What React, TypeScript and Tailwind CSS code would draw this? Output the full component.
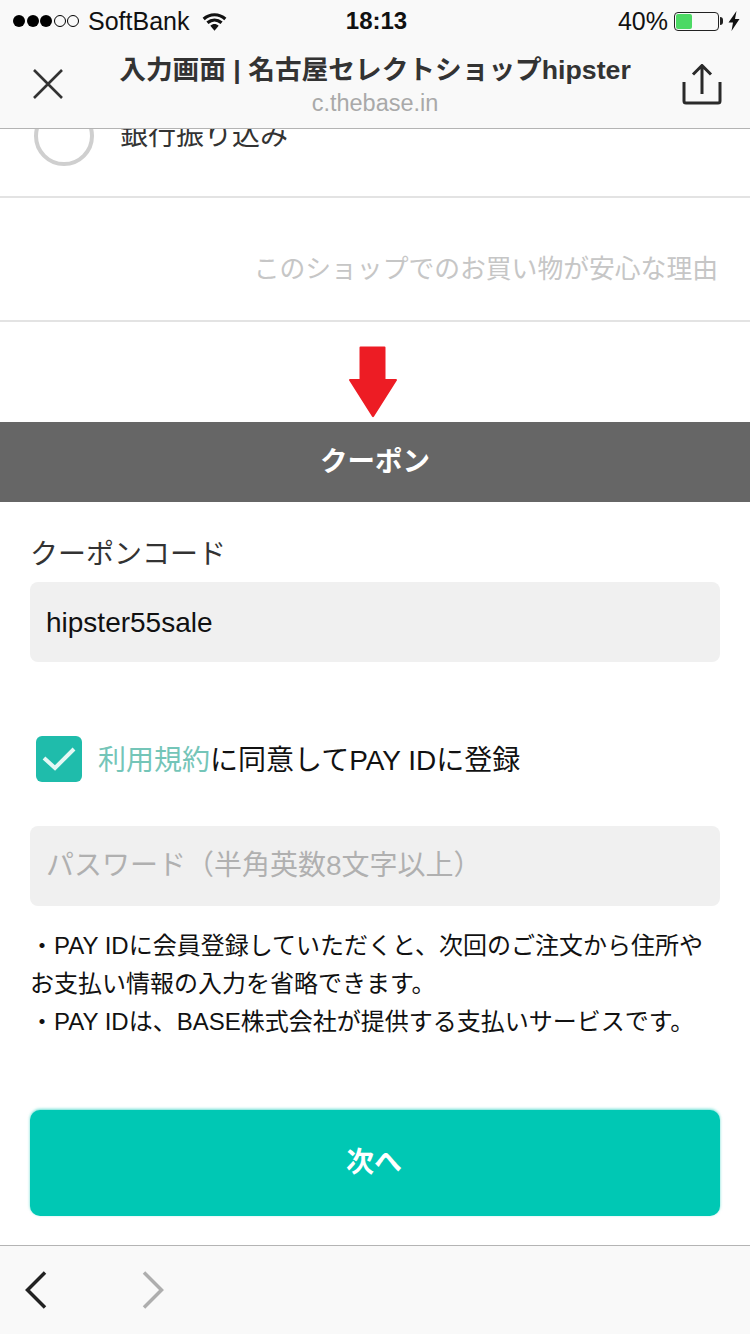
const font = "font-['Liberation_Sans','Noto_Sans_CJK_JP',sans-serif]";

function StatusBar() {
  return (
    <div className="flex h-[42px] items-center pl-[13px] pr-[10px] text-[25px] leading-[42px] text-[#111]">
      <div className="flex flex-1 items-center">
        <div className="flex gap-[1.500px]">
          {[0, 1, 2].map((i) => (
            <span key={i} className="h-[12px] w-[12px] rounded-full bg-black" />
          ))}
          {[0, 1].map((i) => (
            <span key={i} className="h-[12px] w-[12px] rounded-full border border-black" />
          ))}
        </div>
        <span className="ml-[9px]">SoftBank</span>
        <svg width="25" height="19" viewBox="0 0 30 22" className="ml-[13px]">
          <path d="M2 8C9.500 1.200 20.500 1.200 28 8" fill="none" stroke="#111" strokeWidth="3.800" />
          <path d="M6.500 12.500c5.200-4.400 11.800-4.400 17 0" fill="none" stroke="#111" strokeWidth="3.800" />
          <path d="M10 16c3-2.600 7-2.600 10 0L15 22z" fill="#111" />
        </svg>
      </div>
      <div className="text-[24px] font-bold">18:13</div>
      <div className="flex flex-1 items-center justify-end">
        <span>40%</span>
        <div className="ml-[6px] flex h-[19px] w-[45px] items-center rounded-[4px] border border-[#222] p-[1px]">
          <div className="h-full w-[16px] rounded-[2px] bg-[#4cd964]" />
        </div>
        <div className="ml-[1px] h-[8px] w-[3px] rounded-r-sm bg-[#222]" />
        <svg width="12" height="20" viewBox="0 0 12 20" className="ml-[5px]">
          <path d="M8.500 0 .5 11.500H5L3.500 20 11.500 8H7z" fill="#111" />
        </svg>
      </div>
    </div>
  );
}

function Header() {
  return (
    <header className="relative z-10 h-[129px] shrink-0 border-b border-[#b4b4b4] bg-[#f9f9f9]">
      <StatusBar />
      <div className="flex h-[86px] items-start">
        <div className="flex w-[96px] justify-center pt-[26px]">
          <svg width="32" height="32" viewBox="0 0 32 32">
            <path d="M2 2 30 30M30 2 2 30" stroke="#333" strokeWidth="2.600" fill="none" />
          </svg>
        </div>
        <div className="flex-1 pt-[8px] text-center">
          <div className="text-[26.700px] font-bold leading-[40px] text-[#333]">入力画面 | 名古屋セレクトショップhipster</div>
          <div className="mt-[-1px] text-[23.500px] leading-[28px] text-[#a9a9a9]">c.thebase.in</div>
        </div>
        <div className="flex w-[96px] justify-center pt-[22px]">
          <svg width="40" height="41" viewBox="0 0 40 41">
            <path d="M20 30V2M11 10.500l9-9 9 9" stroke="#2a2a2a" strokeWidth="3" fill="none" />
            <path d="M2 18V37a2 2 0 0 0 2 2H36a2 2 0 0 0 2-2V18" stroke="#2a2a2a" strokeWidth="3" fill="none" />
          </svg>
        </div>
      </div>
    </header>
  );
}

function Field({ children, muted }: { children: React.ReactNode; muted?: boolean }) {
  return (
    <div className={`flex h-[80px] items-center rounded-[8px] bg-[#f0f0f0] px-[16px] text-[28px] ${muted ? "text-[#b0b0b0]" : "pt-[2px] text-[#111]"}`}>
      {children}
    </div>
  );
}

export default function App() {
  return (
    <div className={`flex h-[1334px] w-[750px] flex-col overflow-hidden bg-white ${font}`}>
      <Header />
      <main className="flex min-h-0 flex-1 flex-col">
        <div className="h-[69px] shrink-0 overflow-hidden border-b-2 border-[#e3e3e3]">
          <div className="mt-[-23px] flex items-center gap-[26px] pl-[34px]">
            <div className="h-[60px] w-[60px] rounded-full border-[4px] border-[#cfcfcf]" />
            <span className="text-[28px] leading-[60px] text-[#333]">銀行振り込み</span>
          </div>
        </div>
        <div className="flex h-[124px] shrink-0 items-center justify-end border-b-2 border-[#e3e3e3] pr-[32px] pt-[20px] text-[25.800px] text-[#c6c6c6]">
          このショップでのお買い物が安心な理由
        </div>
        <div className="flex h-[100px] shrink-0 justify-center pr-[4px] pt-[24px]">
          <svg width="50" height="72" viewBox="0 0 50 72">
            <path d="M11.500 1.500a1 1 0 0 1 1-1h24a1 1 0 0 1 1 1V33H48a1 1 0 0 1 .8 1.600L26 70.500a1.200 1.200 0 0 1-2 0L1.200 34.600A1 1 0 0 1 2 33h9.500z" fill="#ed1c24" />
          </svg>
        </div>
        <div className="flex h-[80px] shrink-0 items-center justify-center bg-[#666] text-[27.500px] font-bold text-white">クーポン</div>
        <div className="px-[30px]">
          <div className="mt-[32px] text-[28px] leading-[42px] text-[#333]">クーポンコード</div>
          <div className="mt-[6px]">
            <Field>hipster55sale</Field>
          </div>
          <div className="mt-[74px] flex h-[46px] items-center pl-[6px]">
            <div className="flex h-[46px] w-[46px] items-center justify-center rounded-[6px] bg-[#1fbcab]">
              <svg width="34" height="26" viewBox="0 0 34 26">
                <path d="M2 12l11 10L32 3" stroke="#e4f8f5" strokeWidth="4" fill="none" />
              </svg>
            </div>
            <span className="ml-[16px] pt-[4px] text-[28px] text-[#111]">
              <span className="text-[#74c5b8]">利用規約</span>に同意してPAY IDに登録
            </span>
          </div>
          <div className="mt-[44px]">
            <Field muted>パスワード（半角英数8文字以上）</Field>
          </div>
          <p className="mt-[21px] text-[24px] leading-[38px] text-[#111]">
            ・PAY IDに会員登録していただくと、次回のご注文から住所や
            <br />
            お支払い情報の入力を省略できます。
            <br />
            ・PAY IDは、BASE株式会社が提供する支払いサービスです。
          </p>
          <div className="mt-[69px] flex h-[106px] items-center justify-center rounded-[10px] bg-[#00c8b4] pr-[2px] text-[28px] font-bold text-white shadow-[0_-1px_3px_rgba(0,200,180,0.6)]">
            次へ
          </div>
        </div>
      </main>
      <footer className="flex h-[89px] shrink-0 items-center border-t border-[#b4b4b4] bg-[#f9f9f9] pl-[25px]">
        <svg width="22" height="38" viewBox="0 0 22 38">
          <path d="M20 1.500 2.500 19 20 36.500" stroke="#222" strokeWidth="3.500" fill="none" />
        </svg>
        <svg width="22" height="38" viewBox="0 0 22 38" className="ml-[95px]">
          <path d="M2 1.500 19.500 19 2 36.500" stroke="#aeaeae" strokeWidth="3.500" fill="none" />
        </svg>
      </footer>
    </div>
  );
}
